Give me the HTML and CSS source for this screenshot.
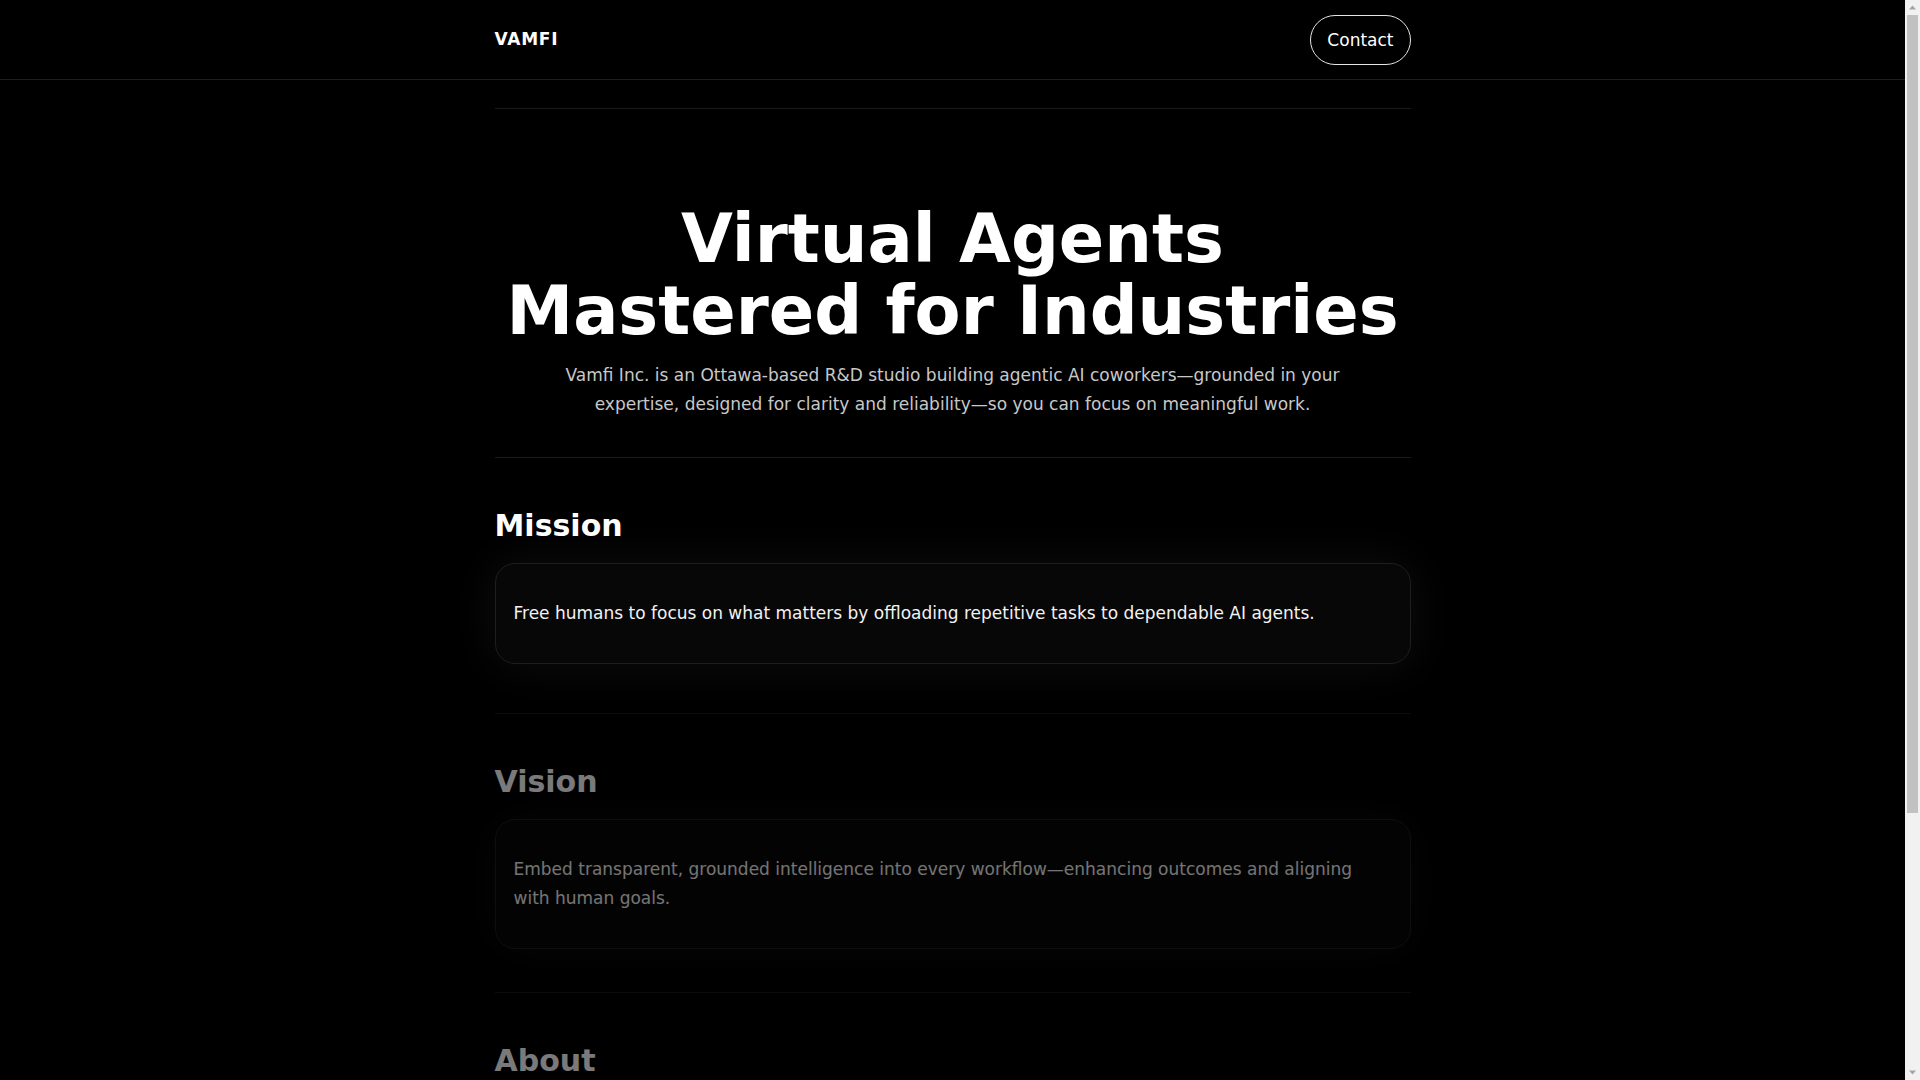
FILE: index.html
```html
<!DOCTYPE html>
<html lang="en">
<head>
<meta charset="utf-8">
<title>Vamfi — Virtual Agents Mastered for Industries</title>
<link rel="stylesheet" href="styles.css">
</head>
<body>
<div class="page">
<header class="site-header">
  <div class="container header-inner">
    <a class="brand" href="#">VAMFI</a>
    <a class="btn-contact" href="#contact">Contact</a>
  </div>
</header>
<main class="container main">
  <section class="hero">
    <h1 class="hero-title">Virtual Agents<br>Mastered for Industries</h1>
    <p class="hero-sub">Vamfi Inc. is an Ottawa-based R&amp;D studio building agentic AI coworkers—grounded in your expertise, designed for clarity and reliability—so you can focus on meaningful work.</p>
  </section>
  <section class="block">
    <h2 class="block-title">Mission</h2>
    <div class="card"><p>Free humans to focus on what matters by offloading repetitive tasks to dependable AI agents.</p></div>
  </section>
  <section class="block reveal">
    <h2 class="block-title">Vision</h2>
    <div class="card"><p>Embed transparent, grounded intelligence into every workflow—enhancing outcomes and aligning with human goals.</p></div>
  </section>
  <section class="block reveal">
    <h2 class="block-title">About</h2>
    <div class="card"><p>We are a small team of engineers and researchers in Ottawa, Canada. We design, build and test AI agents alongside domain experts, so every workflow we automate stays understandable, auditable and aligned with the people who rely on it.</p></div>
  </section>
</main>
<footer class="site-footer" id="contact">
  <div class="container footer-inner">
    <span>© 2025 Vamfi Inc.</span>
    <span>Ottawa, Canada</span>
  </div>
</footer>
</div>
<div class="scrollbar" aria-hidden="true">
  <div class="sb-btn"><svg width="15" height="15" viewBox="0 0 15 15"><polygon points="4,9.5 11,9.5 7.5,5.5" fill="#a3a3a3"/></svg></div>
  <div class="sb-track"><div class="sb-thumb"></div></div>
  <div class="sb-btn"><svg width="15" height="15" viewBox="0 0 15 15"><polygon points="4,5.5 11,5.5 7.5,9.5" fill="#a3a3a3"/></svg></div>
</div>
</body>
</html>
```
FILE: styles.css
```css
* { box-sizing: border-box; }
html, body { margin: 0; padding: 0; height: 100%; }
body {
  background: #000;
  color: #fff;
  font-family: "DejaVu Sans", "Liberation Sans", sans-serif;
  font-size: 17px;
  line-height: 1.7;
  overflow: hidden;
  display: flex;
}
.page {
  flex: 1;
  min-width: 0;
  height: 100vh;
  overflow-y: auto;
}
a { color: inherit; text-decoration: none; }
.container { max-width: 916px; margin: 0 auto; }

.site-header { border-bottom: 1px solid #1f1f1f; }
.header-inner {
  height: 79px;
  display: flex;
  align-items: center;
  justify-content: space-between;
}
.brand { font-weight: 700; font-size: 17px; letter-spacing: 0.045em; }
.btn-contact {
  display: inline-block;
  font-size: 17px;
  line-height: 24px;
  padding: 12px 16px;
  border: 1px solid #e6e6e6;
  border-radius: 999px;
  color: #fff;
}

.main { padding-top: 28px; }

.hero {
  border-top: 1px solid #1a1a1a;
  padding: 94px 0 38px;
  text-align: center;
}
.hero-title {
  margin: 0;
  font-size: 67px;
  line-height: 72px;
  font-weight: 700;
}
.hero-sub {
  margin: 14px auto 0;
  max-width: 800px;
  color: #c8c8c8;
  font-size: 17px;
  line-height: 28.9px;
}

.block {
  border-top: 1px solid #1a1a1a;
  padding: 50px 0 43px;
}
.block-title {
  margin: 0 0 19px;
  font-size: 30px;
  line-height: 36px;
  font-weight: 700;
}
.card {
  background: #070707;
  border: 1px solid #1e1e1e;
  border-radius: 20px;
  padding: 35px 18px;
  box-shadow: 0 0 48px rgba(255, 255, 255, 0.06);
}
.card p {
  margin: 0;
  font-size: 17px;
  line-height: 28.9px;
  color: #f2f2f2;
}

.reveal {
  opacity: 0.48;
  transform: translateY(6px);
}

.site-footer { border-top: 1px solid #1a1a1a; }
.footer-inner {
  display: flex;
  justify-content: space-between;
  padding: 40px 0 60px;
  color: #888;
  font-size: 15px;
}

.scrollbar {
  width: 15px;
  flex: none;
  height: 100vh;
  background: #f1f1f1;
  display: flex;
  flex-direction: column;
}
.sb-btn { height: 15px; flex: none; }
.sb-btn svg { display: block; }
.sb-track { flex: 1; padding: 0 2px; }
.sb-thumb {
  height: 798px;
  background: #c1c1c1;
}
```
